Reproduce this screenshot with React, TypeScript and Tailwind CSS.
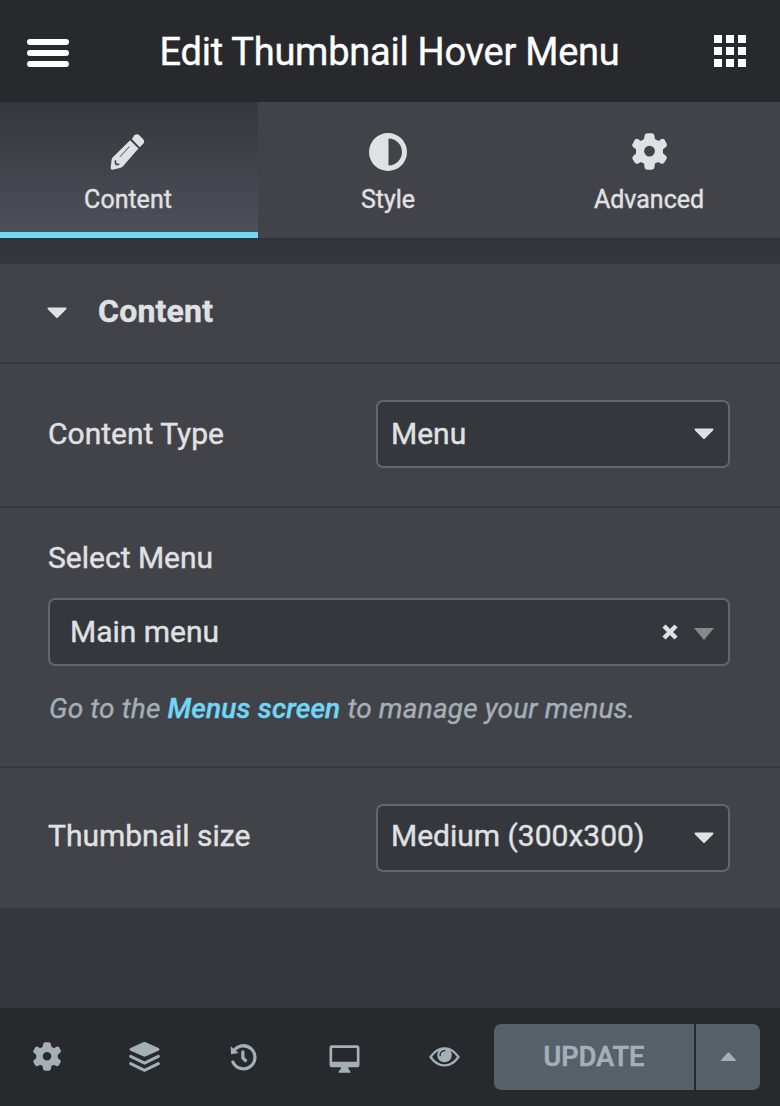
import type { ReactNode } from "react";

const GEAR =
  "M912 81 Q913 72 922 72 L933 72 Q941 72 942 81 L943 89 L954 95 L960 90 Q967 85 972 91 L978 103 Q981 109 974 114 L967 119 L967 132 L974 137 Q981 142 977 149 L971 159 Q966 165 959 161 L953 157 L943 162 L942 172 Q941 180 932 180 L922 180 Q913 180 912 172 L911 162 L901 157 L895 161 Q888 165 883 159 L877 149 Q874 142 881 137 L887 132 L887 119 L880 114 Q873 109 877 103 L883 92 Q888 85 895 90 L901 95 L911 89 Z M927 109 A16 16 0 1 0 927 141 A16 16 0 1 0 927 109 Z";

function Gear({ className }: { className: string }) {
  return (
    <svg viewBox="875 71 104 110" preserveAspectRatio="none" className={className} fill="currentColor">
      <path fillRule="evenodd" d={GEAR} />
    </svg>
  );
}

function Pencil() {
  return (
    <svg viewBox="332 104 104 109" className="mr-[1px] h-[36px] w-[35px]" fill="currentColor">
      <path d="M392 123 L417 148 L369 203 Q364 207 358 208 L338 212 Q332 212 333 206 L336 181 Q337 177 341 173 Z" />
      <path d="M405 108 Q412 102 419 107 L432 121 Q437 127 432 133 L421 144 L397 119 Z" />
      <path d="M361 173 L390 142" stroke="#404348" strokeWidth="3" fill="none" />
      <path d="M345 184 L349 183 L351 193 L360 194 L359 198 L349 199 Q343 192 345 184 Z" fill="#414449" />
    </svg>
  );
}

function Caret({ className }: { className: string }) {
  return (
    <svg viewBox="0 0 20 12" className={className} fill="currentColor" stroke="currentColor" strokeWidth="2" strokeLinejoin="round">
      <path d="M1.5 1.5 H18.5 L10 10 Z" />
    </svg>
  );
}

function Tab({ className, label, children }: { className: string; label: string; children: ReactNode }) {
  return (
    <button className={`flex flex-col items-center ${className}`}>
      <span className="mt-[31px] flex h-[38px] items-center justify-center">{children}</span>
      <span className="mt-[13px] text-[25px] leading-[32px]">{label}</span>
    </button>
  );
}

function Select({ value, textClass }: { value: string; textClass: string }) {
  return (
    <div className="flex h-[68px] w-[354px] items-center justify-between rounded-[7px] border-2 border-[#64666a] bg-[#34373c] pr-[14px] pl-[13px]">
      <span className={`text-[30px] leading-[36px] ${textClass}`}>{value}</span>
      <Caret className="h-[12px] w-[20px]" />
    </div>
  );
}

export default function App() {
  return (
    <div className="flex h-[1106px] w-[780px] flex-col overflow-hidden bg-[#34373c] font-['Roboto',sans-serif] text-[#e0e1e3] [-webkit-text-stroke:0.4px]">
      <header className="flex h-[102px] shrink-0 items-center justify-between bg-[#28292d] pr-[34px] pl-[27px] text-white">
        <div className="mt-[4px] flex w-[42px] flex-col gap-[5px]">
          <span className="h-[6px] rounded-full bg-white" />
          <span className="h-[6px] rounded-full bg-white" />
          <span className="h-[6px] rounded-full bg-white" />
        </div>
        <h1 className="mt-[2px] ml-[-4px] text-[38px] leading-[44px] tracking-[-0.25px]">Edit Thumbnail Hover Menu</h1>
        <div className="grid w-[32px] grid-cols-3 gap-[4px]">
          {[...Array(9)].map((_, i) => (
            <span key={i} className="h-[8px] w-[8px] bg-white" />
          ))}
        </div>
      </header>

      <nav className="flex h-[136px] shrink-0 bg-[#424348]">
        <Tab label="Content" className="w-[258px] border-b-6 border-[#71d7f7] bg-linear-to-b from-[#34373b] to-[#4d5059] pr-[2px]">
          <Pencil />
        </Tab>
        <Tab label="Style" className="w-[260px]">
          <svg viewBox="0 0 38 38" className="h-[38px] w-[38px]" fill="currentColor">
            <path fillRule="evenodd" d="M19 0 A19 19 0 1 0 19 38 A19 19 0 1 0 19 0 Z M19.5 5.5 A13.5 13.5 0 0 1 19.5 32.5 Z" />
          </svg>
        </Tab>
        <Tab label="Advanced" className="w-[262px]">
          <Gear className="mb-[1px] h-[37px] w-[35px]" />
        </Tab>
      </nav>

      <div className="h-[26px] shrink-0 bg-linear-to-b from-[#303338] to-[#35383d]" />

      <main className="shrink-0 bg-[#424348]">
        <div className="flex h-[100px] items-center border-b-2 border-[#36383d] pl-[47px]">
          <Caret className="h-[12px] w-[20px]" />
          <h2 className="mb-[5px] ml-[31px] text-[32px] leading-[38px] font-bold tracking-[0.2px]">Content</h2>
        </div>
        <div className="flex h-[144px] items-center justify-between border-b-2 border-[#36383d] pr-[50px] pl-[48px]">
          <label className="mb-[2px] text-[30px] leading-[36px]">Content Type</label>
          <div className="mb-[2px]">
            <Select value="Menu" textClass="mb-[1px]" />
          </div>
        </div>
        <div className="flex h-[260px] flex-col border-b-2 border-[#36383d] pt-[32px] pr-[50px] pl-[48px]">
          <label className="text-[30px] leading-[36px]">Select Menu</label>
          <div className="mt-[22px] flex h-[68px] items-center rounded-[7px] border-2 border-[#64666a] bg-[#34373c] pr-[14px] pl-[20px]">
            <span className="flex-1 text-[30px] leading-[36px]">Main menu</span>
            <svg viewBox="0 0 16 16" className="h-[16px] w-[16px]" stroke="currentColor" strokeWidth="4.5" fill="none">
              <path d="M2 2 L14 14 M14 2 L2 14" />
            </svg>
            <svg viewBox="0 0 20 12" className="mt-[3px] ml-[16px] h-[12px] w-[20px]" fill="#888888">
              <path d="M0 0 H20 L10 12 Z" />
            </svg>
          </div>
          <p className="mt-[26px] ml-[1px] text-[28px] leading-[34px] tracking-[0.15px] whitespace-nowrap text-[#a4afb7] italic">
            Go to the <a className="font-medium text-[#71d7f7]">Menus screen</a> to manage your menus.
          </p>
        </div>
        <div className="flex h-[140px] items-center justify-between pr-[50px] pl-[48px]">
          <label className="mb-[4px] text-[30px] leading-[36px]">Thumbnail size</label>
          <Select value="Medium (300x300)" textClass="mb-[5px]" />
        </div>
      </main>

      <div className="flex-1" />

      <footer className="flex h-[98px] shrink-0 items-center bg-[#28292d] pr-[20px] text-[#a4afb7]">
        <div className="flex flex-1 items-center pl-[33px]">
          <Gear className="mb-[1px] h-[29px] w-[28px]" />
          <svg viewBox="389 125 92 90" className="mb-[1px] ml-[68px] h-[30px] w-[31px]" fill="currentColor">
            <path d="M431 126 Q435 124 439 126 L477 143 Q483 147 477 151 L439 168 Q435 170 431 168 L393 151 Q387 147 393 143 Z" />
            <path d="M393.5 168 L435 188 L476.5 168" fill="none" stroke="currentColor" strokeWidth="9" strokeLinecap="round" />
            <path d="M393.5 190 L435 210 L476.5 190" fill="none" stroke="currentColor" strokeWidth="9" strokeLinecap="round" />
          </svg>
          <svg viewBox="692 129 80 82" className="ml-[70px] h-[27px] w-[27px]" fill="none" stroke="currentColor" strokeWidth="10" strokeLinecap="round">
            <path d="M702 151 A35 35 0 1 1 700 184" />
            <path d="M730 153 V171 L738 179" />
            <path d="M693 136 L717 156 L694 160 Z" fill="currentColor" stroke="none" />
          </svg>
          <svg viewBox="116 134 92 84" className="mt-[3px] ml-[72px] h-[28px] w-[31px]" fill="currentColor">
            <path fillRule="evenodd" d="M124 135 H200 Q207 135 207 142 V194 Q207 201 200 201 H173 Q173 208 180 214 V217 H144 V214 Q152 208 152 201 H124 Q117 201 117 194 V142 Q117 135 124 135 Z M127 143 Q125 143 125 145 V184 H199 V145 Q199 143 197 143 Z" />
          </svg>
          <svg viewBox="416 140 92 60" className="ml-[69px] h-[20px] w-[31px]" fill="none" stroke="currentColor" strokeWidth="7">
            <path d="M420 170 Q439 143 462 144 Q485 143 504 170 Q485 196 462 195 Q439 196 420 170 Z" strokeLinejoin="round" />
            <circle cx="462" cy="164" r="22" fill="currentColor" stroke="none" />
            <path d="M449 166 Q448 152 463 151" stroke="#28292d" strokeWidth="4" strokeLinecap="round" />
          </svg>
        </div>
        <div className="flex h-[66px] gap-[2px] text-[#a4afb7]">
          <button className="w-[200px] rounded-l-[7px] bg-[#566068] pb-[1px] text-[27px] leading-[32px] font-medium tracking-[0.1px] [-webkit-text-stroke:0.7px]">
            UPDATE
          </button>
          <button className="flex w-[64px] items-center justify-center rounded-r-[7px] bg-[#566068]">
            <svg viewBox="0 0 15 9" className="mb-[1px] h-[9px] w-[15px]" fill="currentColor">
              <path d="M0.5 9 Q-0.3 8.3 0.5 7.5 L6.7 0.8 Q7.5 0 8.3 0.8 L14.5 7.5 Q15.3 8.3 14.5 9 Z" />
            </svg>
          </button>
        </div>
      </footer>
    </div>
  );
}
